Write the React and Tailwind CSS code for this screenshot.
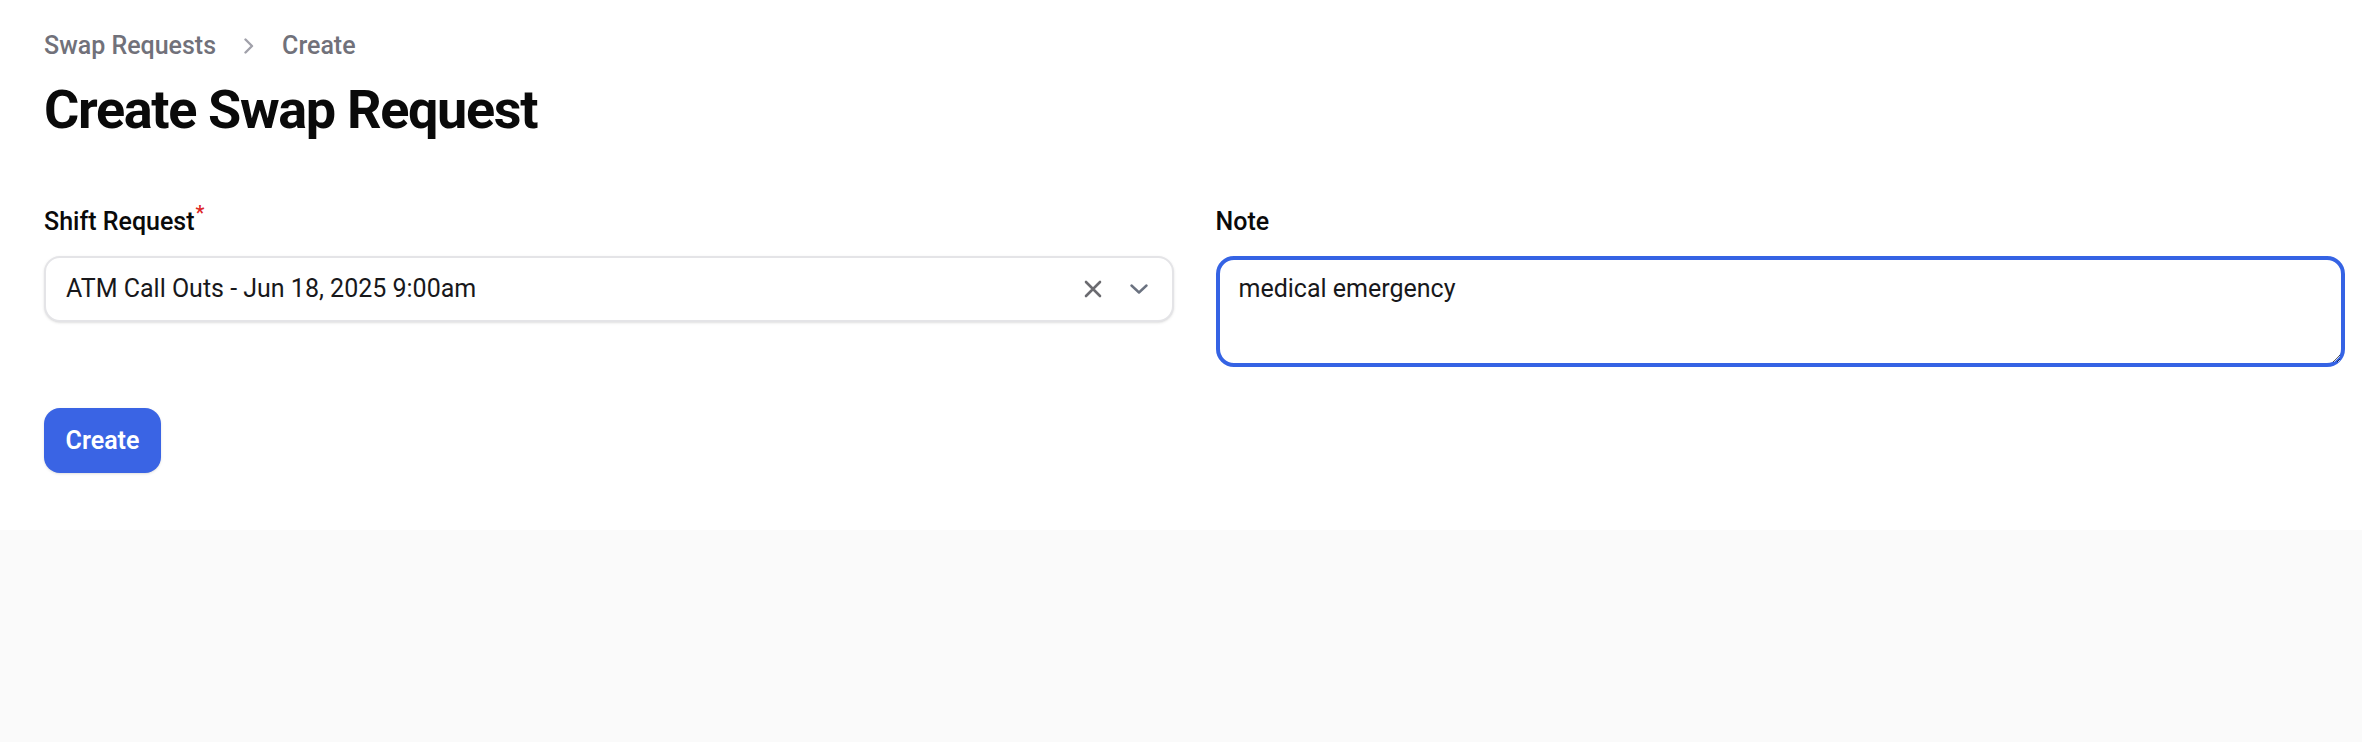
import React from "react";

export default function App() {
  return (
    <div className="min-h-[742px] bg-[#fafafa] font-['Roboto',sans-serif]">
      <div className="bg-white pl-[44px] pr-[17px] pt-[26px] pb-[57px]">
        {/* Breadcrumb */}
        <nav className="flex items-center h-[40px] text-[25px] text-[#71717a] font-medium">
          <span>Swap Requests</span>
          <svg className="mx-[27px] w-[12px] h-[16px]" viewBox="0 0 12 16" fill="none" stroke="#a1a1aa" strokeWidth="2.4" strokeLinecap="round" strokeLinejoin="round">
            <path d="M2.5 1.5 L9 8 L2.5 14.5" />
          </svg>
          <span>Create</span>
        </nav>

        <h1 className="mt-[8px] text-[54px] leading-[72px] font-bold tracking-tight text-[#0a0a0a]">
          Create Swap Request
        </h1>

        {/* Form */}
        <div className="mt-[56px] grid grid-cols-2 gap-x-[42px] items-start">
          <div>
            <label className="block h-[40px] leading-[40px] text-[25px] font-medium text-[#0a0a0a]">
              Shift Request<sup className="text-[#dc2626] text-[20px] font-medium ml-[1px]">*</sup>
            </label>
            <div className="mt-[14px] h-[66px] flex items-center rounded-[16px] border-2 border-[#e4e4e7] bg-white shadow-sm pl-[20px] pr-[24px]">
              <span className="flex-1 text-[25px] text-[#18181b]">ATM Call Outs - Jun 18, 2025 9:00am</span>
              <svg className="w-[18px] h-[18px]" viewBox="0 0 18 18" fill="none" stroke="#6b6b70" strokeWidth="2.6" strokeLinecap="round">
                <path d="M2 2 L16 16 M16 2 L2 16" />
              </svg>
              <svg className="ml-[28px] w-[18px] h-[10px]" viewBox="0 0 18 10" fill="none" stroke="#6b7280" strokeWidth="2.4" strokeLinecap="round" strokeLinejoin="round">
                <path d="M1.5 1.5 L9 8.5 L16.5 1.5" />
              </svg>
            </div>
          </div>
          <div>
            <label className="block h-[40px] leading-[40px] text-[25px] font-medium text-[#0a0a0a]">
              Note
            </label>
            <textarea
              defaultValue="medical emergency"
              className="mt-[14px] block w-full h-[111px] rounded-[18px] border-[4px] border-[#3563e4] bg-white px-[19px] py-[9px] text-[25px] leading-[40px] text-[#18181b] outline-none resize-y"
            />
          </div>
        </div>

        <button className="mt-[41px] h-[65px] w-[117px] rounded-[16px] bg-[#3a64e4] text-white text-[25px] font-semibold shadow-sm">
          Create
        </button>
      </div>
    </div>
  );
}
